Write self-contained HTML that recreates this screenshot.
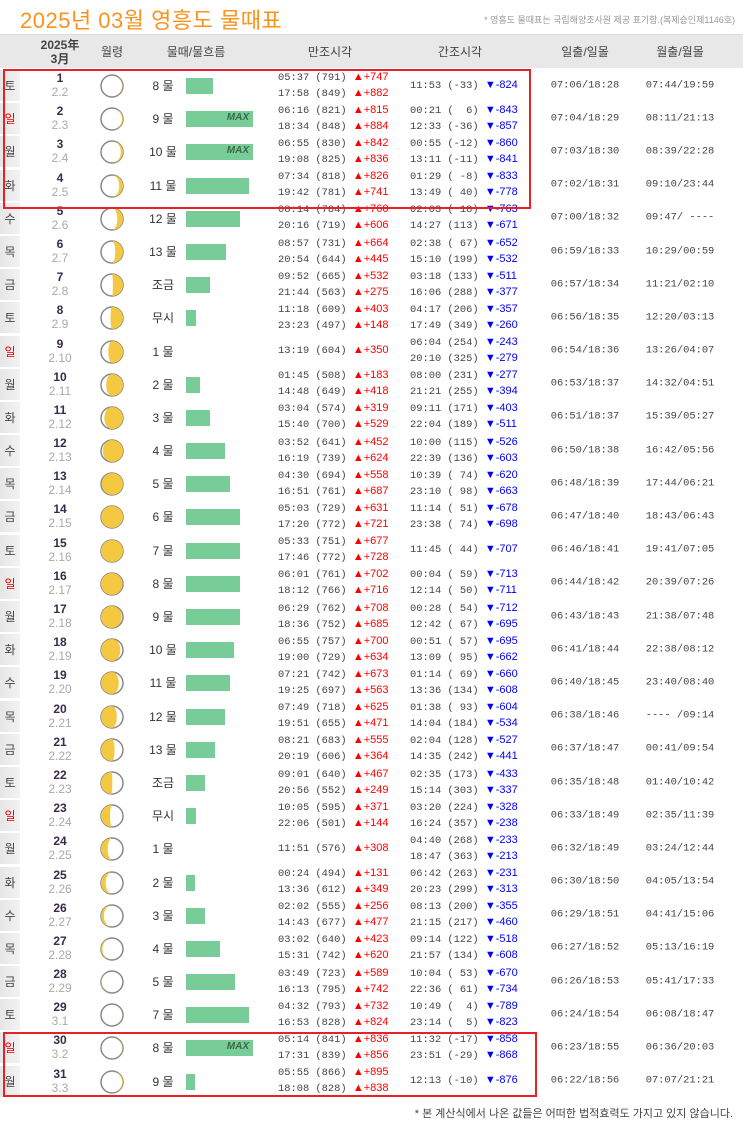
<!DOCTYPE html>
<html><head><meta charset="utf-8"><style>
body{margin:0;width:743px;height:1135px;background:#fff;font-family:"Liberation Sans","Noto Sans CJK KR",sans-serif;color:#333;position:relative;overflow:hidden}
.title{position:absolute;left:20px;top:3px;font-size:22px;color:#f7931e;letter-spacing:0.5px}
.note{position:absolute;right:8px;top:13px;font-size:9px;color:#999}
.hd{position:absolute;left:0;top:34px;width:743px;height:33px;background:#e8e8e8;border-top:1px solid #ddd;font-size:12px;color:#444}
.hd div{position:absolute;top:0;height:33px;display:flex;align-items:center;justify-content:center;text-align:center;line-height:14px}
.tb{position:absolute;left:0;top:69px;width:743px}
.r{position:relative;height:33.2px;font-size:11px}
.r>*{position:absolute}
.d{left:0;top:1px;width:20px;height:31px;background:linear-gradient(90deg,#e6e6e6,#f2f2f2);display:flex;align-items:center;justify-content:center;font-size:12px;color:#444}
.d.s{color:#e00}
.n{left:40px;width:40px;top:2px;text-align:center;line-height:14px}
.n b{color:#3a2a4a;font-size:12px;display:block}
.n span{color:#aaa;font-size:12px}
.m{left:100px;top:5px}
.w{left:143px;width:40px;top:0;height:33px;display:flex;align-items:center;justify-content:center;font-size:12px;color:#333}
.b{left:186px;top:9px;height:16px;background:#78cc98}
.b em{position:absolute;right:4px;top:1px;font-size:10px;font-weight:bold;color:#3a6a4a}
.t{top:16.6px;transform:translateY(-50%);display:block;line-height:15px;white-space:pre;font-family:"Liberation Mono",monospace;font-size:10.4px;color:#444}
.h{left:278px}.l{left:410px}
.t i{font-style:normal;color:#f00;font-family:"Liberation Sans",sans-serif;font-size:11px}
.t u{text-decoration:none;color:#00f;font-family:"Liberation Sans",sans-serif;font-size:11px}
.su{left:540px;width:90px;text-align:center}
.mo{left:635px;width:90px;text-align:center}
.box{position:absolute;border:2px solid #e8202a;box-sizing:border-box}
.foot{position:absolute;right:10px;top:1105px;font-size:11px;color:#444}
</style></head><body>
<div class="title">2025년 03월 영흥도 물때표</div>
<div class="note">* 영흥도 물때표는 국립해양조사원 제공 표기함.(복제승인제1146호)</div>
<div class="hd">
<div style="left:40px;width:40px;font-weight:bold">2025年<br>3月</div>
<div style="left:92px;width:40px">월령</div>
<div style="left:150px;width:92px">물때/물흐름</div>
<div style="left:285px;width:90px">만조시각</div>
<div style="left:415px;width:90px">간조시각</div>
<div style="left:540px;width:90px">일출/일몰</div>
<div style="left:635px;width:90px">월출/월몰</div>
</div>
<div class="tb">
<div class="r"><div class="d">토</div><div class="n"><b>1</b><span>2.2</span></div><svg class="m" width="24" height="24"><circle cx="12" cy="12" r="11" fill="#fff" stroke="#888" stroke-width="1.5"/><path d="M12 1A11 11 0 0 1 12 23A10.7 11 0 0 0 12 1Z" fill="#f5c842"/></svg><div class="w">8 물</div><div class="b" style="width:27px"></div><div class="t h">05:37 (791) <i>▲+747</i>
17:58 (849) <i>▲+882</i></div><div class="t l">11:53 (-33) <u>▼-824</u></div><div class="t su">07:06/18:28</div><div class="t mo">07:44/19:59</div></div>
<div class="r"><div class="d s">일</div><div class="n"><b>2</b><span>2.3</span></div><svg class="m" width="24" height="24"><circle cx="12" cy="12" r="11" fill="#fff" stroke="#888" stroke-width="1.5"/><path d="M12 1A11 11 0 0 1 12 23A10 11 0 0 0 12 1Z" fill="#f5c842"/></svg><div class="w">9 물</div><div class="b" style="width:67px"><em>MAX</em></div><div class="t h">06:16 (821) <i>▲+815</i>
18:34 (848) <i>▲+884</i></div><div class="t l">00:21 (  6) <u>▼-843</u>
12:33 (-36) <u>▼-857</u></div><div class="t su">07:04/18:29</div><div class="t mo">08:11/21:13</div></div>
<div class="r"><div class="d">월</div><div class="n"><b>3</b><span>2.4</span></div><svg class="m" width="24" height="24"><circle cx="12" cy="12" r="11" fill="#fff" stroke="#888" stroke-width="1.5"/><path d="M12 1A11 11 0 0 1 12 23A8.8 11 0 0 0 12 1Z" fill="#f5c842"/></svg><div class="w">10 물</div><div class="b" style="width:67px"><em>MAX</em></div><div class="t h">06:55 (830) <i>▲+842</i>
19:08 (825) <i>▲+836</i></div><div class="t l">00:55 (-12) <u>▼-860</u>
13:11 (-11) <u>▼-841</u></div><div class="t su">07:03/18:30</div><div class="t mo">08:39/22:28</div></div>
<div class="r"><div class="d">화</div><div class="n"><b>4</b><span>2.5</span></div><svg class="m" width="24" height="24"><circle cx="12" cy="12" r="11" fill="#fff" stroke="#888" stroke-width="1.5"/><path d="M12 1A11 11 0 0 1 12 23A7.2 11 0 0 0 12 1Z" fill="#f5c842"/></svg><div class="w">11 물</div><div class="b" style="width:63px"></div><div class="t h">07:34 (818) <i>▲+826</i>
19:42 (781) <i>▲+741</i></div><div class="t l">01:29 ( -8) <u>▼-833</u>
13:49 ( 40) <u>▼-778</u></div><div class="t su">07:02/18:31</div><div class="t mo">09:10/23:44</div></div>
<div class="r"><div class="d">수</div><div class="n"><b>5</b><span>2.6</span></div><svg class="m" width="24" height="24"><circle cx="12" cy="12" r="11" fill="#fff" stroke="#888" stroke-width="1.5"/><path d="M12 1A11 11 0 0 1 12 23A5.3 11 0 0 0 12 1Z" fill="#f5c842"/></svg><div class="w">12 물</div><div class="b" style="width:54px"></div><div class="t h">08:14 (784) <i>▲+760</i>
20:16 (719) <i>▲+606</i></div><div class="t l">02:03 ( 18) <u>▼-763</u>
14:27 (113) <u>▼-671</u></div><div class="t su">07:00/18:32</div><div class="t mo">09:47/ ----</div></div>
<div class="r"><div class="d">목</div><div class="n"><b>6</b><span>2.7</span></div><svg class="m" width="24" height="24"><circle cx="12" cy="12" r="11" fill="#fff" stroke="#888" stroke-width="1.5"/><path d="M12 1A11 11 0 0 1 12 23A3.2 11 0 0 0 12 1Z" fill="#f5c842"/></svg><div class="w">13 물</div><div class="b" style="width:40px"></div><div class="t h">08:57 (731) <i>▲+664</i>
20:54 (644) <i>▲+445</i></div><div class="t l">02:38 ( 67) <u>▼-652</u>
15:10 (199) <u>▼-532</u></div><div class="t su">06:59/18:33</div><div class="t mo">10:29/00:59</div></div>
<div class="r"><div class="d">금</div><div class="n"><b>7</b><span>2.8</span></div><svg class="m" width="24" height="24"><circle cx="12" cy="12" r="11" fill="#fff" stroke="#888" stroke-width="1.5"/><path d="M12 1A11 11 0 0 1 12 23A0.9 11 0 0 0 12 1Z" fill="#f5c842"/></svg><div class="w">조금</div><div class="b" style="width:24px"></div><div class="t h">09:52 (665) <i>▲+532</i>
21:44 (563) <i>▲+275</i></div><div class="t l">03:18 (133) <u>▼-511</u>
16:06 (288) <u>▼-377</u></div><div class="t su">06:57/18:34</div><div class="t mo">11:21/02:10</div></div>
<div class="r"><div class="d">토</div><div class="n"><b>8</b><span>2.9</span></div><svg class="m" width="24" height="24"><circle cx="12" cy="12" r="11" fill="#fff" stroke="#888" stroke-width="1.5"/><path d="M12 1A11 11 0 0 1 12 23A1.5 11 0 0 1 12 1Z" fill="#f5c842"/></svg><div class="w">무시</div><div class="b" style="width:10px"></div><div class="t h">11:18 (609) <i>▲+403</i>
23:23 (497) <i>▲+148</i></div><div class="t l">04:17 (206) <u>▼-357</u>
17:49 (349) <u>▼-260</u></div><div class="t su">06:56/18:35</div><div class="t mo">12:20/03:13</div></div>
<div class="r"><div class="d s">일</div><div class="n"><b>9</b><span>2.10</span></div><svg class="m" width="24" height="24"><circle cx="12" cy="12" r="11" fill="#fff" stroke="#888" stroke-width="1.5"/><path d="M12 1A11 11 0 0 1 12 23A3.7 11 0 0 1 12 1Z" fill="#f5c842"/></svg><div class="w">1 물</div><div class="t h">13:19 (604) <i>▲+350</i></div><div class="t l">06:04 (254) <u>▼-243</u>
20:10 (325) <u>▼-279</u></div><div class="t su">06:54/18:36</div><div class="t mo">13:26/04:07</div></div>
<div class="r"><div class="d">월</div><div class="n"><b>10</b><span>2.11</span></div><svg class="m" width="24" height="24"><circle cx="12" cy="12" r="11" fill="#fff" stroke="#888" stroke-width="1.5"/><path d="M12 1A11 11 0 0 1 12 23A5.8 11 0 0 1 12 1Z" fill="#f5c842"/></svg><div class="w">2 물</div><div class="b" style="width:14px"></div><div class="t h">01:45 (508) <i>▲+183</i>
14:48 (649) <i>▲+418</i></div><div class="t l">08:00 (231) <u>▼-277</u>
21:21 (255) <u>▼-394</u></div><div class="t su">06:53/18:37</div><div class="t mo">14:32/04:51</div></div>
<div class="r"><div class="d">화</div><div class="n"><b>11</b><span>2.12</span></div><svg class="m" width="24" height="24"><circle cx="12" cy="12" r="11" fill="#fff" stroke="#888" stroke-width="1.5"/><path d="M12 1A11 11 0 0 1 12 23A7.7 11 0 0 1 12 1Z" fill="#f5c842"/></svg><div class="w">3 물</div><div class="b" style="width:24px"></div><div class="t h">03:04 (574) <i>▲+319</i>
15:40 (700) <i>▲+529</i></div><div class="t l">09:11 (171) <u>▼-403</u>
22:04 (189) <u>▼-511</u></div><div class="t su">06:51/18:37</div><div class="t mo">15:39/05:27</div></div>
<div class="r"><div class="d">수</div><div class="n"><b>12</b><span>2.13</span></div><svg class="m" width="24" height="24"><circle cx="12" cy="12" r="11" fill="#fff" stroke="#888" stroke-width="1.5"/><path d="M12 1A11 11 0 0 1 12 23A9.2 11 0 0 1 12 1Z" fill="#f5c842"/></svg><div class="w">4 물</div><div class="b" style="width:39px"></div><div class="t h">03:52 (641) <i>▲+452</i>
16:19 (739) <i>▲+624</i></div><div class="t l">10:00 (115) <u>▼-526</u>
22:39 (136) <u>▼-603</u></div><div class="t su">06:50/18:38</div><div class="t mo">16:42/05:56</div></div>
<div class="r"><div class="d">목</div><div class="n"><b>13</b><span>2.14</span></div><svg class="m" width="24" height="24"><circle cx="12" cy="12" r="11" fill="#fff" stroke="#888" stroke-width="1.5"/><path d="M12 1A11 11 0 0 1 12 23A10.3 11 0 0 1 12 1Z" fill="#f5c842"/></svg><div class="w">5 물</div><div class="b" style="width:44px"></div><div class="t h">04:30 (694) <i>▲+558</i>
16:51 (761) <i>▲+687</i></div><div class="t l">10:39 ( 74) <u>▼-620</u>
23:10 ( 98) <u>▼-663</u></div><div class="t su">06:48/18:39</div><div class="t mo">17:44/06:21</div></div>
<div class="r"><div class="d">금</div><div class="n"><b>14</b><span>2.15</span></div><svg class="m" width="24" height="24"><circle cx="12" cy="12" r="11" fill="#fff" stroke="#888" stroke-width="1.5"/><path d="M12 1A11 11 0 0 1 12 23A10.9 11 0 0 1 12 1Z" fill="#f5c842"/></svg><div class="w">6 물</div><div class="b" style="width:54px"></div><div class="t h">05:03 (729) <i>▲+631</i>
17:20 (772) <i>▲+721</i></div><div class="t l">11:14 ( 51) <u>▼-678</u>
23:38 ( 74) <u>▼-698</u></div><div class="t su">06:47/18:40</div><div class="t mo">18:43/06:43</div></div>
<div class="r"><div class="d">토</div><div class="n"><b>15</b><span>2.16</span></div><svg class="m" width="24" height="24"><circle cx="12" cy="12" r="11" fill="#fff" stroke="#888" stroke-width="1.5"/><path d="M12 1A11 11 0 0 0 12 23A11 11 0 0 0 12 1Z" fill="#f5c842"/></svg><div class="w">7 물</div><div class="b" style="width:54px"></div><div class="t h">05:33 (751) <i>▲+677</i>
17:46 (772) <i>▲+728</i></div><div class="t l">11:45 ( 44) <u>▼-707</u></div><div class="t su">06:46/18:41</div><div class="t mo">19:41/07:05</div></div>
<div class="r"><div class="d s">일</div><div class="n"><b>16</b><span>2.17</span></div><svg class="m" width="24" height="24"><circle cx="12" cy="12" r="11" fill="#fff" stroke="#888" stroke-width="1.5"/><path d="M12 1A11 11 0 0 0 12 23A10.6 11 0 0 0 12 1Z" fill="#f5c842"/></svg><div class="w">8 물</div><div class="b" style="width:54px"></div><div class="t h">06:01 (761) <i>▲+702</i>
18:12 (766) <i>▲+716</i></div><div class="t l">00:04 ( 59) <u>▼-713</u>
12:14 ( 50) <u>▼-711</u></div><div class="t su">06:44/18:42</div><div class="t mo">20:39/07:26</div></div>
<div class="r"><div class="d">월</div><div class="n"><b>17</b><span>2.18</span></div><svg class="m" width="24" height="24"><circle cx="12" cy="12" r="11" fill="#fff" stroke="#888" stroke-width="1.5"/><path d="M12 1A11 11 0 0 0 12 23A9.7 11 0 0 0 12 1Z" fill="#f5c842"/></svg><div class="w">9 물</div><div class="b" style="width:54px"></div><div class="t h">06:29 (762) <i>▲+708</i>
18:36 (752) <i>▲+685</i></div><div class="t l">00:28 ( 54) <u>▼-712</u>
12:42 ( 67) <u>▼-695</u></div><div class="t su">06:43/18:43</div><div class="t mo">21:38/07:48</div></div>
<div class="r"><div class="d">화</div><div class="n"><b>18</b><span>2.19</span></div><svg class="m" width="24" height="24"><circle cx="12" cy="12" r="11" fill="#fff" stroke="#888" stroke-width="1.5"/><path d="M12 1A11 11 0 0 0 12 23A8.4 11 0 0 0 12 1Z" fill="#f5c842"/></svg><div class="w">10 물</div><div class="b" style="width:48px"></div><div class="t h">06:55 (757) <i>▲+700</i>
19:00 (729) <i>▲+634</i></div><div class="t l">00:51 ( 57) <u>▼-695</u>
13:09 ( 95) <u>▼-662</u></div><div class="t su">06:41/18:44</div><div class="t mo">22:38/08:12</div></div>
<div class="r"><div class="d">수</div><div class="n"><b>19</b><span>2.20</span></div><svg class="m" width="24" height="24"><circle cx="12" cy="12" r="11" fill="#fff" stroke="#888" stroke-width="1.5"/><path d="M12 1A11 11 0 0 0 12 23A6.8 11 0 0 0 12 1Z" fill="#f5c842"/></svg><div class="w">11 물</div><div class="b" style="width:44px"></div><div class="t h">07:21 (742) <i>▲+673</i>
19:25 (697) <i>▲+563</i></div><div class="t l">01:14 ( 69) <u>▼-660</u>
13:36 (134) <u>▼-608</u></div><div class="t su">06:40/18:45</div><div class="t mo">23:40/08:40</div></div>
<div class="r"><div class="d">목</div><div class="n"><b>20</b><span>2.21</span></div><svg class="m" width="24" height="24"><circle cx="12" cy="12" r="11" fill="#fff" stroke="#888" stroke-width="1.5"/><path d="M12 1A11 11 0 0 0 12 23A4.8 11 0 0 0 12 1Z" fill="#f5c842"/></svg><div class="w">12 물</div><div class="b" style="width:39px"></div><div class="t h">07:49 (718) <i>▲+625</i>
19:51 (655) <i>▲+471</i></div><div class="t l">01:38 ( 93) <u>▼-604</u>
14:04 (184) <u>▼-534</u></div><div class="t su">06:38/18:46</div><div class="t mo">---- /09:14</div></div>
<div class="r"><div class="d">금</div><div class="n"><b>21</b><span>2.22</span></div><svg class="m" width="24" height="24"><circle cx="12" cy="12" r="11" fill="#fff" stroke="#888" stroke-width="1.5"/><path d="M12 1A11 11 0 0 0 12 23A2.6 11 0 0 0 12 1Z" fill="#f5c842"/></svg><div class="w">13 물</div><div class="b" style="width:29px"></div><div class="t h">08:21 (683) <i>▲+555</i>
20:19 (606) <i>▲+364</i></div><div class="t l">02:04 (128) <u>▼-527</u>
14:35 (242) <u>▼-441</u></div><div class="t su">06:37/18:47</div><div class="t mo">00:41/09:54</div></div>
<div class="r"><div class="d">토</div><div class="n"><b>22</b><span>2.23</span></div><svg class="m" width="24" height="24"><circle cx="12" cy="12" r="11" fill="#fff" stroke="#888" stroke-width="1.5"/><path d="M12 1A11 11 0 0 0 12 23A0.3 11 0 0 0 12 1Z" fill="#f5c842"/></svg><div class="w">조금</div><div class="b" style="width:19px"></div><div class="t h">09:01 (640) <i>▲+467</i>
20:56 (552) <i>▲+249</i></div><div class="t l">02:35 (173) <u>▼-433</u>
15:14 (303) <u>▼-337</u></div><div class="t su">06:35/18:48</div><div class="t mo">01:40/10:42</div></div>
<div class="r"><div class="d s">일</div><div class="n"><b>23</b><span>2.24</span></div><svg class="m" width="24" height="24"><circle cx="12" cy="12" r="11" fill="#fff" stroke="#888" stroke-width="1.5"/><path d="M12 1A11 11 0 0 0 12 23A2 11 0 0 1 12 1Z" fill="#f5c842"/></svg><div class="w">무시</div><div class="b" style="width:10px"></div><div class="t h">10:05 (595) <i>▲+371</i>
22:06 (501) <i>▲+144</i></div><div class="t l">03:20 (224) <u>▼-328</u>
16:24 (357) <u>▼-238</u></div><div class="t su">06:33/18:49</div><div class="t mo">02:35/11:39</div></div>
<div class="r"><div class="d">월</div><div class="n"><b>24</b><span>2.25</span></div><svg class="m" width="24" height="24"><circle cx="12" cy="12" r="11" fill="#fff" stroke="#888" stroke-width="1.5"/><path d="M12 1A11 11 0 0 0 12 23A4.3 11 0 0 1 12 1Z" fill="#f5c842"/></svg><div class="w">1 물</div><div class="t h">11:51 (576) <i>▲+308</i></div><div class="t l">04:40 (268) <u>▼-233</u>
18:47 (363) <u>▼-213</u></div><div class="t su">06:32/18:49</div><div class="t mo">03:24/12:44</div></div>
<div class="r"><div class="d">화</div><div class="n"><b>25</b><span>2.26</span></div><svg class="m" width="24" height="24"><circle cx="12" cy="12" r="11" fill="#fff" stroke="#888" stroke-width="1.5"/><path d="M12 1A11 11 0 0 0 12 23A6.3 11 0 0 1 12 1Z" fill="#f5c842"/></svg><div class="w">2 물</div><div class="b" style="width:9px"></div><div class="t h">00:24 (494) <i>▲+131</i>
13:36 (612) <i>▲+349</i></div><div class="t l">06:42 (263) <u>▼-231</u>
20:23 (299) <u>▼-313</u></div><div class="t su">06:30/18:50</div><div class="t mo">04:05/13:54</div></div>
<div class="r"><div class="d">수</div><div class="n"><b>26</b><span>2.27</span></div><svg class="m" width="24" height="24"><circle cx="12" cy="12" r="11" fill="#fff" stroke="#888" stroke-width="1.5"/><path d="M12 1A11 11 0 0 0 12 23A8.1 11 0 0 1 12 1Z" fill="#f5c842"/></svg><div class="w">3 물</div><div class="b" style="width:19px"></div><div class="t h">02:02 (555) <i>▲+256</i>
14:43 (677) <i>▲+477</i></div><div class="t l">08:13 (200) <u>▼-355</u>
21:15 (217) <u>▼-460</u></div><div class="t su">06:29/18:51</div><div class="t mo">04:41/15:06</div></div>
<div class="r"><div class="d">목</div><div class="n"><b>27</b><span>2.28</span></div><svg class="m" width="24" height="24"><circle cx="12" cy="12" r="11" fill="#fff" stroke="#888" stroke-width="1.5"/><path d="M12 1A11 11 0 0 0 12 23A9.5 11 0 0 1 12 1Z" fill="#f5c842"/></svg><div class="w">4 물</div><div class="b" style="width:34px"></div><div class="t h">03:02 (640) <i>▲+423</i>
15:31 (742) <i>▲+620</i></div><div class="t l">09:14 (122) <u>▼-518</u>
21:57 (134) <u>▼-608</u></div><div class="t su">06:27/18:52</div><div class="t mo">05:13/16:19</div></div>
<div class="r"><div class="d">금</div><div class="n"><b>28</b><span>2.29</span></div><svg class="m" width="24" height="24"><circle cx="12" cy="12" r="11" fill="#fff" stroke="#888" stroke-width="1.5"/><path d="M12 1A11 11 0 0 0 12 23A10.4 11 0 0 1 12 1Z" fill="#f5c842"/></svg><div class="w">5 물</div><div class="b" style="width:49px"></div><div class="t h">03:49 (723) <i>▲+589</i>
16:13 (795) <i>▲+742</i></div><div class="t l">10:04 ( 53) <u>▼-670</u>
22:36 ( 61) <u>▼-734</u></div><div class="t su">06:26/18:53</div><div class="t mo">05:41/17:33</div></div>
<div class="r"><div class="d">토</div><div class="n"><b>29</b><span>3.1</span></div><svg class="m" width="24" height="24"><circle cx="12" cy="12" r="11" fill="#fff" stroke="#888" stroke-width="1.5"/><path d="M12 1A11 11 0 0 1 12 23A10.9 11 0 0 0 12 1Z" fill="#f5c842"/></svg><div class="w">7 물</div><div class="b" style="width:63px"></div><div class="t h">04:32 (793) <i>▲+732</i>
16:53 (828) <i>▲+824</i></div><div class="t l">10:49 (  4) <u>▼-789</u>
23:14 (  5) <u>▼-823</u></div><div class="t su">06:24/18:54</div><div class="t mo">06:08/18:47</div></div>
<div class="r"><div class="d s">일</div><div class="n"><b>30</b><span>3.2</span></div><svg class="m" width="24" height="24"><circle cx="12" cy="12" r="11" fill="#fff" stroke="#888" stroke-width="1.5"/><path d="M12 1A11 11 0 0 1 12 23A10.7 11 0 0 0 12 1Z" fill="#f5c842"/></svg><div class="w">8 물</div><div class="b" style="width:67px"><em>MAX</em></div><div class="t h">05:14 (841) <i>▲+836</i>
17:31 (839) <i>▲+856</i></div><div class="t l">11:32 (-17) <u>▼-858</u>
23:51 (-29) <u>▼-868</u></div><div class="t su">06:23/18:55</div><div class="t mo">06:36/20:03</div></div>
<div class="r"><div class="d">월</div><div class="n"><b>31</b><span>3.3</span></div><svg class="m" width="24" height="24"><circle cx="12" cy="12" r="11" fill="#fff" stroke="#888" stroke-width="1.5"/><path d="M12 1A11 11 0 0 1 12 23A10 11 0 0 0 12 1Z" fill="#f5c842"/></svg><div class="w">9 물</div><div class="b" style="width:9px"></div><div class="t h">05:55 (866) <i>▲+895</i>
18:08 (828) <i>▲+838</i></div><div class="t l">12:13 (-10) <u>▼-876</u></div><div class="t su">06:22/18:56</div><div class="t mo">07:07/21:21</div></div>
</div>
<div class="box" style="left:3px;top:69px;width:528px;height:140px"></div>
<div class="box" style="left:3px;top:1032px;width:534px;height:65px"></div>
<div class="foot">* 본 계산식에서 나온 값들은 어떠한 법적효력도 가지고 있지 않습니다.</div>
</body></html>
